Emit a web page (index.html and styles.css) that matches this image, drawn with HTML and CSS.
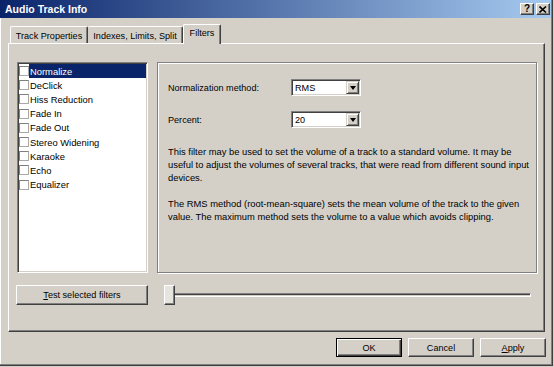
FILE: index.html
```html
<!DOCTYPE html>
<html lang="en">
<head>
    <meta charset="UTF-8">
    <meta name="viewport" content="width=device-width, initial-scale=1.0">
    <title>Audio Track Info</title>
    <link rel="stylesheet" href="styles.css">
</head>
<body>
    <div class="window">
        <div class="titlebar">
            <span class="title">Audio Track Info</span>
            <div class="title-buttons">
                <span class="title-btn help">?</span>
                <span class="title-btn close">
                    <svg width="8" height="7" viewBox="0 0 8 7"><path d="M0.5 0.5 L7 6.5 M7 0.5 L0.5 6.5" stroke="#000" stroke-width="1.6"/></svg>
                </span>
            </div>
        </div>

        <div class="tabs">
            <div class="tab tab-track">Track Properties</div>
            <div class="tab tab-indexes">Indexes, Limits, Split</div>
            <div class="tab tab-filters active">Filters</div>
        </div>

        <div class="panel">
            <div class="main-row">
                <ul class="filter-list">
                    <li class="selected"><span class="check"></span><span class="item-label">Normalize</span></li>
                    <li><span class="check"></span><span class="item-label">DeClick</span></li>
                    <li><span class="check"></span><span class="item-label">Hiss Reduction</span></li>
                    <li><span class="check"></span><span class="item-label">Fade In</span></li>
                    <li><span class="check"></span><span class="item-label">Fade Out</span></li>
                    <li><span class="check"></span><span class="item-label">Stereo Widening</span></li>
                    <li><span class="check"></span><span class="item-label">Karaoke</span></li>
                    <li><span class="check"></span><span class="item-label">Echo</span></li>
                    <li><span class="check"></span><span class="item-label">Equalizer</span></li>
                </ul>

                <div class="group-box">
                    <div class="field">
                        <label class="field-label">Normalization method:</label>
                        <div class="combo"><span class="combo-value">RMS</span><span class="combo-arrow"><i></i></span></div>
                    </div>
                    <div class="field">
                        <label class="field-label">Percent:</label>
                        <div class="combo"><span class="combo-value">20</span><span class="combo-arrow"><i></i></span></div>
                    </div>
                    <p class="description">This filter may be used to set the volume of a track to a standard volume. It may be useful to adjust the volumes of several tracks, that were read from different sound input devices.</p>
                    <p class="description">The RMS method (root-mean-square) sets the mean volume of the track to the given value. The maximum method sets the volume to a value which avoids clipping.</p>
                </div>
            </div>

            <div class="bottom-row">
                <button class="btn test-btn"><u>T</u>est selected filters</button>
                <div class="slider">
                    <div class="channel"></div>
                    <div class="thumb"></div>
                </div>
            </div>
        </div>

        <div class="actions">
            <button class="btn dialog-btn default">OK</button>
            <button class="btn dialog-btn">Cancel</button>
            <button class="btn dialog-btn"><u>A</u>pply</button>
        </div>
    </div>
</body>
</html>
```

FILE: styles.css
```css
/* General Styling */
* {
    box-sizing: border-box;
}

body {
    margin: 0;
    background-color: #d4d0c8;
    font-family: 'Liberation Sans', Arial, sans-serif;
    font-size: 9.1px;
    color: #000;
}

.window {
    width: 553px;
    height: 366px;
    background-color: #d4d0c8;
    border-right: 1px solid #404040;
    border-bottom: 1px solid #404040;
    padding: 0 1px 1px 0;
    box-shadow: inset -1px -1px #808080, inset 1px 0 #ffffff;
    display: flex;
    flex-direction: column;
}

/* Title bar */
.titlebar {
    height: 18px;
    display: flex;
    align-items: center;
    padding: 0 1px 0 5px;
    background: linear-gradient(to right, #0a246a, #a6caf0);
}

.title {
    color: #ffffff;
    font-weight: bold;
    font-size: 10.5px;
}

.title-buttons {
    margin-left: auto;
    display: flex;
    gap: 2px;
}

.title-btn {
    width: 14px;
    height: 12px;
    background-color: #d4d0c8;
    border-top: 1px solid #ffffff;
    border-left: 1px solid #ffffff;
    border-right: 1px solid #404040;
    border-bottom: 1px solid #404040;
    box-shadow: inset -1px -1px #808080;
    display: flex;
    align-items: center;
    justify-content: center;
    font-weight: bold;
    font-size: 10px;
    line-height: 1;
}

/* Tabs */
.tabs {
    height: 25px;
    padding-left: 10px;
    display: flex;
    align-items: flex-end;
}

.tab {
    height: 17px;
    display: flex;
    align-items: center;
    justify-content: center;
    padding-top: 1px;
    border-top: 1px solid #ffffff;
    border-left: 1px solid #ffffff;
    border-right: 1px solid #404040;
    box-shadow: inset -1px 0 #808080;
    border-radius: 2px 2px 0 0;
}

.tab-track {
    width: 78px;
}

.tab-indexes {
    width: 95px;
    border-left: none;
}

.tab-filters {
    width: 38px;
}

.tab.active {
    height: 20px;
    margin-bottom: -1px;
    padding-top: 0;
    padding-bottom: 3px;
    position: relative;
    z-index: 1;
    background-color: #d4d0c8;
}

/* Tab panel */
.panel {
    margin-left: 8px;
    width: 537px;
    height: 289px;
    border-top: 1px solid #ffffff;
    border-left: 1px solid #ffffff;
    border-right: 1px solid #404040;
    border-bottom: 1px solid #404040;
    box-shadow: inset -1px -1px #808080;
    padding: 18px 7px 0 8px;
}

.main-row {
    display: flex;
    gap: 9px;
    height: 211px;
}

.filter-list {
    width: 131px;
    margin: 0;
    padding: 0;
    list-style: none;
    background-color: #ffffff;
    border-top: 1px solid #808080;
    border-left: 1px solid #808080;
    border-right: 1px solid #ffffff;
    border-bottom: 1px solid #ffffff;
    box-shadow: inset 1px 1px #404040, inset -1px -1px #d4d0c8;
    padding: 1px 1px 1px 1px;
}

.filter-list li {
    height: 14.2px;
    display: flex;
    align-items: center;
}

.check {
    width: 10px;
    height: 10px;
    flex: none;
    background-color: #ffffff;
    border: 1px solid #a9a9a9;
    border-top-color: #808080;
    border-left-color: #808080;
}

.item-label {
    flex: 1;
    height: 100%;
    display: flex;
    align-items: center;
    padding-left: 1px;
    font-size: 9.4px;
}

.filter-list li.selected .item-label {
    background-color: #0a246a;
    color: #ffffff;
}

/* Group box */
.group-box {
    flex: 1;
    border: 1px solid #808080;
    box-shadow: inset 1px 1px #ffffff, 1px 1px #ffffff;
    padding: 16px 6px 0 10px;
}

.field {
    display: flex;
    align-items: center;
    height: 17px;
}

.field + .field {
    margin-top: 15px;
}

.field-label {
    width: 123px;
}

.combo {
    width: 70px;
    height: 17px;
    display: flex;
    background-color: #ffffff;
    border-top: 1px solid #808080;
    border-left: 1px solid #808080;
    border-right: 1px solid #ffffff;
    border-bottom: 1px solid #ffffff;
    box-shadow: inset 1px 1px #404040, inset -1px -1px #d4d0c8;
    padding: 1px;
}

.combo-value {
    flex: 1;
    padding-left: 2px;
    display: flex;
    align-items: center;
}

.combo-arrow {
    width: 13px;
    height: 13px;
    background-color: #d4d0c8;
    border-top: 1px solid #d4d0c8;
    border-left: 1px solid #d4d0c8;
    border-right: 1px solid #404040;
    border-bottom: 1px solid #404040;
    box-shadow: inset 1px 1px #ffffff, inset -1px -1px #808080;
    display: flex;
    align-items: center;
    justify-content: center;
}

.combo-arrow i {
    width: 1px;
    height: 0;
    border-left: 3px solid transparent;
    border-right: 3px solid transparent;
    border-top: 4px solid #000000;
}

.description {
    margin: 17px 0 0;
    line-height: 13px;
    font-size: 9.4px;
}

.description + .description {
    margin-top: 13px;
}

/* Buttons */
.btn {
    font-family: 'Liberation Sans', Arial, sans-serif;
    font-size: 9.1px;
    color: #000;
    background-color: #d4d0c8;
    border-top: 1px solid #ffffff;
    border-left: 1px solid #ffffff;
    border-right: 1px solid #404040;
    border-bottom: 1px solid #404040;
    box-shadow: inset -1px -1px #808080;
    padding: 0;
    border-radius: 0;
}

.bottom-row {
    margin-top: 12px;
    margin-left: -1px;
    display: flex;
    align-items: center;
}

.test-btn {
    width: 132px;
    height: 20px;
}

.slider {
    flex: 1;
    height: 20px;
    margin: 0 6px 0 16px;
    position: relative;
    display: flex;
    align-items: center;
}

.channel {
    flex: 1;
    height: 4px;
    margin-left: 3px;
    border-top: 1px solid #808080;
    border-left: 1px solid #808080;
    border-bottom: 1px solid #ffffff;
    border-right: 1px solid #ffffff;
    box-shadow: inset 0 1px #404040;
}

.thumb {
    position: absolute;
    left: 0;
    top: 0;
    width: 11px;
    height: 20px;
    background-color: #e6e4df;
    border-top: 1px solid #ffffff;
    border-left: 1px solid #ffffff;
    border-right: 1px solid #404040;
    border-bottom: 1px solid #404040;
    box-shadow: inset -1px -1px #808080;
}

/* Dialog buttons */
.actions {
    margin-top: 6px;
    padding-right: 5px;
    display: flex;
    justify-content: flex-end;
    gap: 6px;
}

.dialog-btn {
    width: 66px;
    height: 19px;
}

.dialog-btn.default {
    border: 1px solid #000000;
    box-shadow: inset 1px 1px #ffffff, inset -1px -1px #404040, inset -2px -2px #808080;
}
```
